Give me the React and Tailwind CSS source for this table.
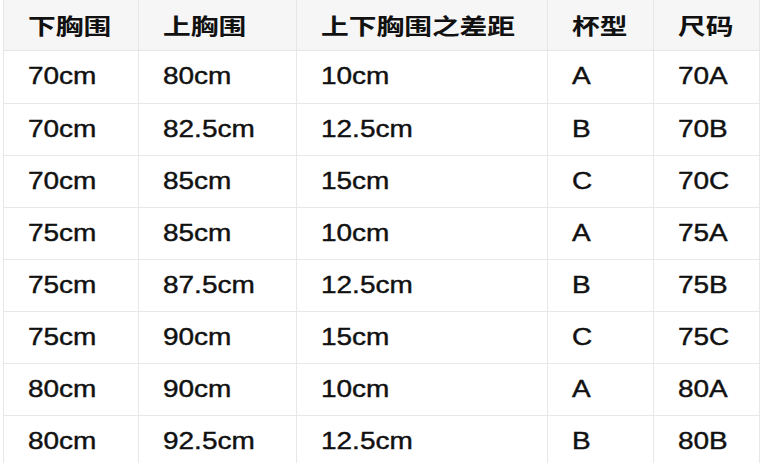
const cols = ["w-[135px]", "w-[158px]", "w-[251px]", "w-[106px]", "w-[106px]"]

const header = ["下胸围", "上胸围", "上下胸围之差距", "杯型", "尺码"]

const rows = [
  ["70cm", "80cm", "10cm", "A", "70A"],
  ["70cm", "82.5cm", "12.5cm", "B", "70B"],
  ["70cm", "85cm", "15cm", "C", "70C"],
  ["75cm", "85cm", "10cm", "A", "75A"],
  ["75cm", "87.5cm", "12.5cm", "B", "75B"],
  ["75cm", "90cm", "15cm", "C", "75C"],
  ["80cm", "90cm", "10cm", "A", "80A"],
  ["80cm", "92.5cm", "12.5cm", "B", "80B"],
]

export default function App() {
  return (
    <div className="h-[463px] w-[765px] overflow-hidden bg-white">
      <div className="ml-[3px] w-[757px] border-l border-[#e6e6e6]">
        <div className="flex h-[51px] border-b border-[#e6e6e6] bg-[#f6f6f6]">
          {header.map((h, i) => (
            <div key={i} className={cn(cols[i], "flex items-center border-r border-[#e6e6e6] pl-6 pb-[3px]")}>
              <span
                className="inline-block origin-left scale-x-[1.26] text-[22px] font-bold leading-none text-[#111]"
                style={{ fontFamily: '"Noto Sans CJK SC", sans-serif' }}
              >
                {h}
              </span>
            </div>
          ))}
        </div>
        {rows.map((r, ri) => (
          <div
            key={ri}
            className={cn(ri === 0 ? "h-[53px]" : "h-[52px]", "flex border-b border-[#e8e8e8] bg-white")}
          >
            {r.map((c, i) => (
              <div key={i} className={cn(cols[i], "flex items-center border-r border-[#e8e8e8] pl-6")}>
                <span
                  className="inline-block origin-left scale-x-[1.19] text-[23.5px] leading-none text-[#111] [-webkit-text-stroke:0.4px_#111]"
                  style={{ fontFamily: '"Liberation Sans", Arial, sans-serif' }}
                >
                  {c}
                </span>
              </div>
            ))}
          </div>
        ))}
      </div>
    </div>
  )
}

function cn(...a) {
  return a.filter(Boolean).join(" ")
}
